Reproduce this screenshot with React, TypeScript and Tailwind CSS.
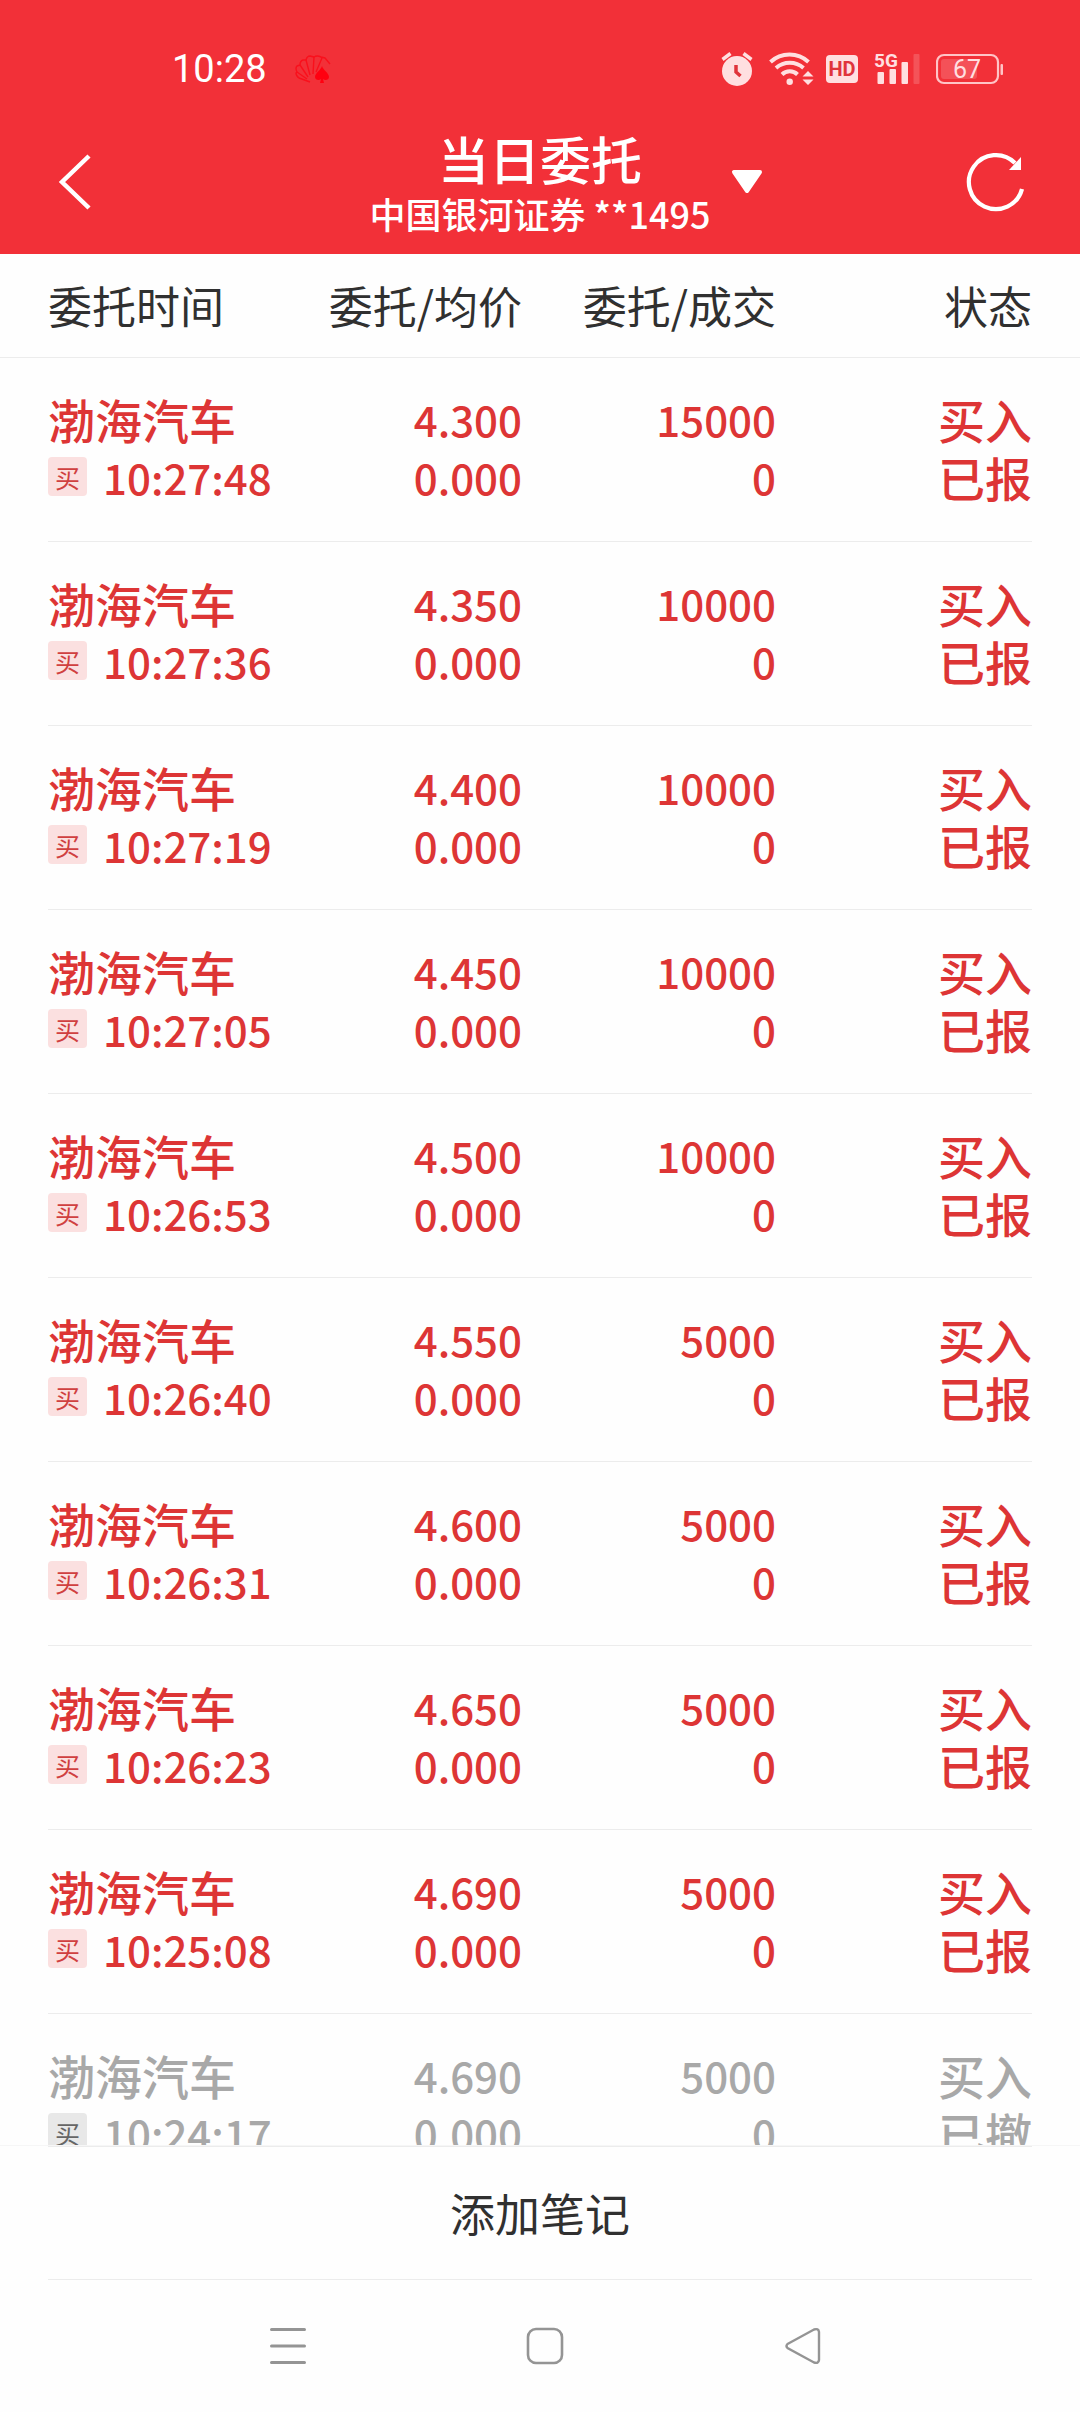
type Order = {
  time: string;
  price: string;
  amount: string;
  status: string;
  cancelled?: boolean;
};

const orders: Order[] = [
  { time: "10:27:48", price: "4.300", amount: "15000", status: "已报" },
  { time: "10:27:36", price: "4.350", amount: "10000", status: "已报" },
  { time: "10:27:19", price: "4.400", amount: "10000", status: "已报" },
  { time: "10:27:05", price: "4.450", amount: "10000", status: "已报" },
  { time: "10:26:53", price: "4.500", amount: "10000", status: "已报" },
  { time: "10:26:40", price: "4.550", amount: "5000", status: "已报" },
  { time: "10:26:31", price: "4.600", amount: "5000", status: "已报" },
  { time: "10:26:23", price: "4.650", amount: "5000", status: "已报" },
  { time: "10:25:08", price: "4.690", amount: "5000", status: "已报" },
  { time: "10:24:17", price: "4.690", amount: "5000", status: "已撤", cancelled: true },
];

function CardsIcon() {
  return (
    <svg width="36" height="30" viewBox="0 0 36 30" fill="none" stroke="#f9101c" strokeWidth="1.4" strokeLinejoin="round">
      <path d="M15 28 L4 24 Q1 22 1 19 L2 18 Q0 14 2 12 L5 11 Q5 7 8 6 L11 6 Q12 2 15 2 L19 3 Q22 1 26 3 L30 4 L35 10" />
      <path d="M2 18 L12 25 M5 11 L13 23 M11 6 L15 21 M19 3 L18 20 M27 4 L21 18" />
      <path d="M27 12 C28 16 34 19 34 23 C34 26 30 27 28 25 L29 29 L25 29 L26 25 C24 27 20 26 20 23 C20 19 26 16 27 12Z" fill="#ff0010" stroke="none" />
    </svg>
  );
}

function AlarmIcon() {
  return (
    <svg width="32" height="38" viewBox="0 0 32 38" fill="none">
      <circle cx="16" cy="21" r="15" fill="#ffdfe0" />
      <path d="M1.5 9.5 L9.5 3.5 M22.5 3.5 L30.5 9.5" stroke="#ffdfe0" strokeWidth="3.5" />
      <path d="M15 15 V22 L19.5 26" stroke="#e0343b" strokeWidth="3.5" />
    </svg>
  );
}

function WifiIcon() {
  return (
    <svg width="45" height="38" viewBox="0 0 45 38" fill="none" stroke="#ffdfe0" strokeWidth="4">
      <path d="M1.5 12 A28 28 0 0 1 39.5 12" />
      <path d="M7 18 A21 21 0 0 1 34.5 18" />
      <path d="M13 24.5 A11 11 0 0 1 28.5 24.5" />
      <circle cx="20.7" cy="31.7" r="3.2" fill="#ffdfe0" stroke="none" />
      <path d="M39 21 L44.5 26.5 H33.5Z M33.5 29.5 H44.5 L39 35Z" fill="#ffdfe0" stroke="none" />
    </svg>
  );
}

function SignalIcon() {
  return (
    <svg width="46" height="42" viewBox="0 -2 46 42" fill="#ffdfe0">
      <text x="0" y="17" fontSize="19" fontWeight="700" className="font-['Roboto',sans-serif]">5G</text>
      <rect x="3.5" y="22" width="6.5" height="12" rx="1" />
      <rect x="15.5" y="19" width="6.5" height="15" rx="1" />
      <rect x="27.5" y="12" width="6.5" height="22" rx="1" />
      <rect x="39.5" y="4" width="6" height="30" rx="1" opacity="0.2" />
    </svg>
  );
}

function BatteryIcon() {
  return (
    <svg width="67" height="38" viewBox="0 0 67 38" fill="none">
      <rect x="1" y="5" width="61" height="28" rx="7" stroke="#ffc4c6" strokeWidth="2.2" />
      <rect x="5" y="9" width="36" height="20" rx="3" fill="#fff" opacity="0.16" />
      <rect x="64.5" y="14" width="2.5" height="11" rx="1" fill="#ffc4c6" />
      <text x="31" y="28" textAnchor="middle" fontSize="25" fill="#ffdfe0" className="font-['Roboto',sans-serif]">67</text>
    </svg>
  );
}

function StatusBar() {
  return (
    <div className="flex h-[110px] items-end justify-between pr-[77px] pb-5 pl-[172px]">
      <div className="flex items-center gap-7">
        <span className="font-['Roboto',sans-serif] text-[38px] leading-[42px]">10:28</span>
        <CardsIcon />
      </div>
      <div className="flex h-[42px] items-center">
        <div className="flex items-center gap-4">
          <AlarmIcon />
          <WifiIcon />
        </div>
        <span className="mr-4 ml-3 flex h-7 w-8 items-center justify-center rounded bg-[#ffdfe0] font-['Roboto',sans-serif] text-[20px] font-bold text-[#e0343b]">
          HD
        </span>
        <div className="flex items-center gap-4">
          <SignalIcon />
          <BatteryIcon />
        </div>
      </div>
    </div>
  );
}

function TitleBar() {
  return (
    <div className="grid h-36 grid-cols-[1fr_auto_1fr] items-center px-14">
      <button type="button" aria-label="返回" className="justify-self-start">
        <svg width="36" height="58" viewBox="0 0 36 58" fill="none" stroke="#fff" strokeWidth="4.5">
          <path d="M33 3 L6 29 L33 55" />
        </svg>
      </button>
      <div className="pt-1 text-center font-medium">
        <h1 className="text-[51px] leading-[58px]">当日委托</h1>
        <p className="text-[36px] leading-[52px]">中国银河证券 **1495</p>
      </div>
      <div className="flex items-center justify-between pl-5">
        <button type="button" aria-label="切换账户">
          <svg width="32" height="26" viewBox="0 0 32 26" fill="#fff" stroke="#fff" strokeWidth="4" strokeLinejoin="round">
            <path d="M3 3 H29 L16 22Z" />
          </svg>
        </button>
        <button type="button" aria-label="刷新">
          <svg width="60" height="62" viewBox="-3 0 60 62" fill="none">
            <path d="M55 38 A27 27 0 1 1 48 12" stroke="#fff" strokeWidth="4.2" />
            <path d="M54 6 V19 H42Z" fill="#fff" />
          </svg>
        </button>
      </div>
    </div>
  );
}

function OrderRow({ order }: { order: Order }) {
  const tone = order.cancelled ? "text-[#a8a8a8]" : "text-[#dd3535]";
  const tag = order.cancelled ? "bg-[#e8e8e8] text-[#666]" : "bg-[#fbe0e0] text-[#d04040]";
  const cell = "h-[184px] border-b border-[#ececec] pt-8 leading-[58px] font-medium";

  return (
    <tr className={tone}>
      <td className="p-0">
        <div className={`${cell} ml-12`}>
          <div className="text-[47px]">渤海汽车</div>
          <div className="flex h-[58px] items-center gap-4">
            <span className={`flex size-[39px] shrink-0 items-center justify-center rounded text-[25px] font-normal ${tag}`}>
              买
            </span>
            <span className="text-[42px]">{order.time}</span>
          </div>
        </div>
      </td>
      <td className="p-0 text-right">
        <div className={`${cell} text-[42px]`}>
          <div>{order.price}</div>
          <div>0.000</div>
        </div>
      </td>
      <td className="p-0 text-right">
        <div className={`${cell} text-[42px]`}>
          <div>{order.amount}</div>
          <div>0</div>
        </div>
      </td>
      <td className="p-0 text-right">
        <div className={`${cell} mr-12 text-[47px]`}>
          <div>买入</div>
          <div>{order.status}</div>
        </div>
      </td>
    </tr>
  );
}

function NavBar() {
  return (
    <nav className="flex h-[132px] items-center justify-between pr-[24%] pl-[25%]">
      <button type="button" aria-label="菜单">
        <svg width="36" height="38" viewBox="0 0 36 38" stroke="#949494" strokeWidth="3" strokeLinecap="round">
          <path d="M1.5 2.5 H34.5 M1.5 19 H34.5 M1.5 35.5 H34.5" />
        </svg>
      </button>
      <button type="button" aria-label="主页">
        <svg width="38" height="38" viewBox="0 0 38 38" fill="none" stroke="#949494" strokeWidth="2.6">
          <rect x="2" y="2" width="34" height="34" rx="8" />
        </svg>
      </button>
      <button type="button" aria-label="返回桌面">
        <svg width="36" height="38" viewBox="0 0 36 38" fill="none" stroke="#949494" strokeWidth="2.4">
          <path d="M2.5 17 L29 2.5 Q33.5 1 34 5 V33 Q33.5 37 29 35.5 L2.5 21 Q0.5 19 2.5 17Z" />
        </svg>
      </button>
    </nav>
  );
}

export default function App() {
  return (
    <div className="flex h-screen flex-col bg-[#fefefe] font-['Noto_Sans_CJK_SC',sans-serif] text-[#303030]">
      <header className="shrink-0 bg-[#f23038] text-white">
        <StatusBar />
        <TitleBar />
      </header>

      <main className="min-h-0 flex-1 overflow-hidden">
        <table className="w-full table-fixed border-collapse">
          <colgroup>
            <col />
            <col className="w-[222px]" />
            <col className="w-[254px]" />
            <col className="w-[304px]" />
          </colgroup>
          <thead>
            <tr className="h-[103px] border-b border-[#ececec] text-[44px] leading-[58px]">
              <th className="p-0 pl-12 text-left font-normal">委托时间</th>
              <th className="p-0 text-right font-normal">委托/均价</th>
              <th className="p-0 text-right font-normal">委托/成交</th>
              <th className="p-0 pr-12 text-right font-normal">状态</th>
            </tr>
          </thead>
          <tbody>
            {orders.map((order) => (
              <OrderRow key={order.time} order={order} />
            ))}
          </tbody>
        </table>
      </main>

      <footer className="shrink-0 border-t border-[#f6f6f6]">
        <div className="mx-12 border-y border-[#ececec]">
          <button type="button" className="h-[132px] w-full text-[45px]">
            添加笔记
          </button>
        </div>
        <NavBar />
      </footer>
    </div>
  );
}
